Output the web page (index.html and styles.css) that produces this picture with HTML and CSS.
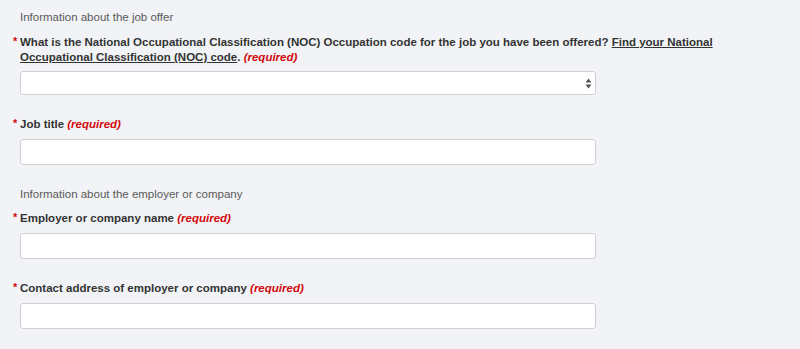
FILE: index.html
```html
<!DOCTYPE html>
<html lang="en">
<head>
<meta charset="utf-8">
<title>Job offer</title>
<link rel="stylesheet" href="styles.css">
</head>
<body>
<form class="form">
  <p class="section">Information about the job offer</p>
  <div class="group">
    <label class="label label-two"><span class="star">*</span>What is the National Occupational Classification (NOC) Occupation code for the job you have been offered? <a class="link" href="#">Find your National Occupational Classification (NOC) code</a>. <em class="req">(required)</em></label>
    <div class="select">
      <svg class="arrows" width="7" height="11" viewBox="0 0 7 11"><path d="M3.5 0.5 L6.5 4.5 L0.5 4.5 Z M3.5 10.5 L6.5 6.5 L0.5 6.5 Z" fill="#555"/></svg>
    </div>
  </div>
  <div class="group">
    <label class="label"><span class="star">*</span>Job title <em class="req">(required)</em></label>
    <div class="input"></div>
  </div>
  <p class="section section-second">Information about the employer or company</p>
  <div class="group">
    <label class="label"><span class="star">*</span>Employer or company name <em class="req">(required)</em></label>
    <div class="input"></div>
  </div>
  <div class="group">
    <label class="label"><span class="star">*</span>Contact address of employer or company <em class="req">(required)</em></label>
    <div class="input"></div>
  </div>
</form>
</body>
</html>
```
FILE: styles.css
```css
html, body {
  margin: 0;
  padding: 0;
  background: #f1f3f6;
}
body {
  font-family: "Liberation Sans", Arial, sans-serif;
  font-size: 11.5px;
  line-height: 16px;
  color: #333;
  width: 800px;
  height: 349px;
  overflow: hidden;
}
.form {
  display: flex;
  flex-direction: column;
  padding: 9px 0 0 20px;
  width: 576px;
}
.section {
  margin: 0 0 10px 0;
  color: #5a5a5a;
}
.section-second {
  margin-bottom: 8px;
}
.group {
  display: flex;
  flex-direction: column;
  margin-bottom: 21px;
}
.label {
  position: relative;
  font-weight: bold;
  color: #333;
  margin-bottom: 7px;
  width: 720px;
}
.label-two {
  line-height: 15px;
  margin-bottom: 6px;
}
.star {
  position: absolute;
  left: -7px;
  top: -1px;
  color: #d3080c;
  font-size: 11px;
}
.link {
  color: #333;
  text-decoration: underline;
}
.req {
  color: #d3080c;
  font-style: italic;
  font-weight: bold;
}
.select, .input {
  box-sizing: border-box;
  background: #fff;
  border: 1px solid #d0d0d0;
  border-radius: 3px;
  width: 576px;
}
.select {
  height: 24px;
  display: flex;
  justify-content: flex-end;
  align-items: center;
  padding-right: 3px;
}
.input {
  height: 26px;
}
```
